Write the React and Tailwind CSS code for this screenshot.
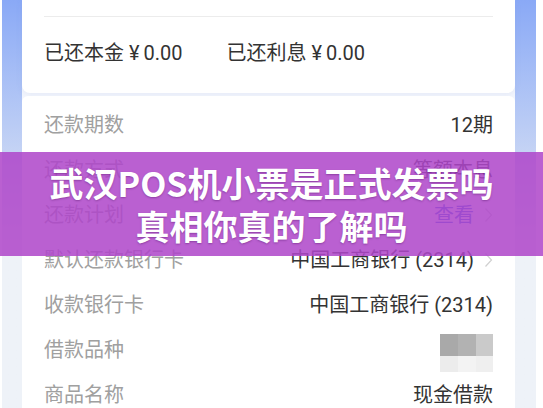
const font = { fontFamily: "Roboto, 'Noto Sans CJK SC', sans-serif" };

const ROWS = [
  { label: "还款期数", value: "12期" },
  { label: "还款方式", value: "等额本息" },
  { label: "还款计划", value: "查看", link: true, chevron: true },
  { label: "默认还款银行卡", value: "中国工商银行 (2314)", chevron: true },
  { label: "收款银行卡", value: "中国工商银行 (2314)" },
  { label: "借款品种", mosaic: true },
  { label: "商品名称", value: "现金借款" },
];

function Chevron() {
  return (
    <svg width="9" height="16" viewBox="0 0 9 16" className="ml-[10px] shrink-0">
      <polyline points="1.5,1.5 7.5,8 1.5,14.5" fill="none" stroke="#d0d0d0" strokeWidth="1.2" />
    </svg>
  );
}

function Mosaic() {
  return (
    <div className="grid grid-cols-[18px_18px_17px] grid-rows-[22px_16px] mt-[6px]">
      <div className="bg-[#a9a9a9]" />
      <div className="bg-[#b2b2b2]" />
      <div className="bg-[#cacaca]" />
      <div className="bg-[#ececec]" />
      <div className="bg-[#f3f3f3]" />
      <div className="bg-[#efefef]" />
    </div>
  );
}

export default function App() {
  return (
    <div className="relative w-[543px] h-[408px] overflow-hidden bg-white" style={font}>
      <div className="ml-[2px] w-[534px] h-full pl-[20px] pr-[21px] bg-gradient-to-b from-[#8aa9f6] via-[#c9d6f4] via-40% to-[#eef2f8] to-60%">
        <div className="bg-[#f3f6fd] h-full">
          {/* summary card */}
          <div className="h-[93px] bg-white rounded-b-[8px] shadow-[0_2px_6px_rgba(120,140,200,0.10)] px-[22px] pt-[16px]">
            <div className="h-px bg-[#ececec]" />
            <div className="flex items-center gap-[44px] mt-[26px] text-[20px] text-[#333] leading-none">
              <span>已还本金 ¥&#8201;0.00</span>
              <span>已还利息 ¥&#8201;0.00</span>
            </div>
          </div>

          {/* detail list */}
          <div className="mt-[3px] bg-white rounded-t-[6px] pt-[6px] px-[22px] h-[320px]">
            {ROWS.map((row) => (
              <div key={row.label} className="h-[45px] flex items-center justify-between text-[20px]">
                <span className="text-[#a0a0a0]">{row.label}</span>
                <div className="flex items-center">
                  {row.mosaic ? (
                    <Mosaic />
                  ) : (
                    <span className={row.link ? "text-[#3d63e8]" : "text-[#333]"}>{row.value}</span>
                  )}
                  {row.chevron && <Chevron />}
                </div>
              </div>
            ))}
          </div>
        </div>
      </div>

      {/* title overlay */}
      <div
        className="absolute left-0 right-0 top-[152px] h-[104px] bg-[rgba(175,70,202,0.86)] flex flex-col items-center justify-center text-white font-bold text-[34px] leading-[43px] [text-shadow:0_1px_2px_rgba(60,0,80,0.35)]"
        style={{ fontFamily: "'Noto Sans CJK SC', 'Noto Sans', sans-serif" }}
      >
        <div>武汉POS机小票是正式发票吗</div>
        <div>真相你真的了解吗</div>
      </div>
    </div>
  );
}
